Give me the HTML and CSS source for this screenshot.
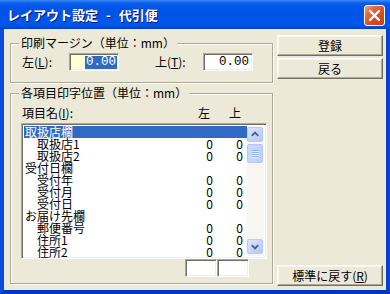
FILE: index.html
```html
<!DOCTYPE html>
<html lang="ja">
<head>
<meta charset="utf-8">
<title>レイアウト設定 - 代引便</title>
<link rel="stylesheet" href="styles.css">
</head>
<body>
<div class="window">
  <div class="titlebar">
    <span class="title">レイアウト設定 - 代引便</span>
    <span class="close">
      <svg width="13" height="13" viewBox="0 0 13 13"><path d="M2 2 L11 11 M11 2 L2 11" stroke="#fff" stroke-width="2.4" stroke-linecap="round"/></svg>
    </span>
  </div>
  <div class="frame">
    <div class="client">
      <div class="leftcol">
        <fieldset class="group g1">
          <legend>印刷マージン（単位：mm）</legend>
          <div class="margin-row">
            <span class="lbl lbl-l">左(<u>L</u>):</span>
            <div class="edit edit-yellow"><span class="val sel">0.00</span></div>
            <span class="lbl lbl-t">上(<u>T</u>):</span>
            <div class="edit"><span class="val">0.00</span></div>
          </div>
        </fieldset>
        <fieldset class="group g2">
          <legend>各項目印字位置（単位：mm）</legend>
          <div class="list-head">
            <span class="hname">項目名(<u>I</u>):</span>
            <span class="hcol hleft">左</span>
            <span class="hcol hright">上</span>
          </div>
          <div class="listbox">
            <div class="items">
              <div class="item selected"><span class="name">取扱店欄</span><span class="num"></span><span class="num"></span></div>
              <div class="item"><span class="name child">取扱店1</span><span class="num">0</span><span class="num">0</span></div>
              <div class="item"><span class="name child">取扱店2</span><span class="num">0</span><span class="num">0</span></div>
              <div class="item"><span class="name">受付日欄</span><span class="num"></span><span class="num"></span></div>
              <div class="item"><span class="name child">受付年</span><span class="num">0</span><span class="num">0</span></div>
              <div class="item"><span class="name child">受付月</span><span class="num">0</span><span class="num">0</span></div>
              <div class="item"><span class="name child">受付日</span><span class="num">0</span><span class="num">0</span></div>
              <div class="item"><span class="name">お届け先欄</span><span class="num"></span><span class="num"></span></div>
              <div class="item"><span class="name child">郵便番号</span><span class="num">0</span><span class="num">0</span></div>
              <div class="item"><span class="name child">住所1</span><span class="num">0</span><span class="num">0</span></div>
              <div class="item"><span class="name child">住所2</span><span class="num">0</span><span class="num">0</span></div>
            </div>
            <div class="vscroll">
              <div class="sbtn">
                <svg width="15" height="15" viewBox="0 0 15 15"><path d="M4 9 L7.5 5.5 L11 9" fill="none" stroke="#4d6185" stroke-width="2"/></svg>
              </div>
              <div class="thumb"><i></i><i></i><i></i><i></i></div>
              <div class="track"></div>
              <div class="sbtn">
                <svg width="15" height="15" viewBox="0 0 15 15"><path d="M4 6 L7.5 9.5 L11 6" fill="none" stroke="#4d6185" stroke-width="2"/></svg>
              </div>
            </div>
          </div>
          <div class="edits">
            <div class="edit small"></div>
            <div class="edit small"></div>
          </div>
        </fieldset>
      </div>
      <div class="rightcol">
        <div class="btn">登録</div>
        <div class="btn">戻る</div>
        <div class="spacer"></div>
        <div class="btn">標準に戻す(<u>R</u>)</div>
      </div>
    </div>
  </div>
</div>
</body>
</html>
```
FILE: styles.css
```css
* { box-sizing: border-box; }
body {
  margin: 0;
  background: #ffffff;
  font-family: "Noto Sans CJK JP", sans-serif;
  font-size: 12px;
  color: #000;
}
.window {
  width: 390px;
  height: 294px;
  display: flex;
  flex-direction: column;
}
.titlebar {
  height: 29px;
  flex: none;
  display: flex;
  align-items: center;
  justify-content: space-between;
  padding: 0 5px 0 7px;
  background: linear-gradient(180deg, #3a8cfb 0, #0b5eea 3px, #0055e8 8px, #0052e5 45%, #0058ec 80%, #0050e0 92%, #003fc8 100%);
}
.title {
  color: #fff;
  font-weight: bold;
  font-size: 13px;
  line-height: 16px;
  word-spacing: 5px;
  text-shadow: 1px 1px 0 #0a1883;
  margin-top: 1px;
}
.close {
  width: 21px;
  height: 21px;
  border: 1px solid #fff;
  border-radius: 3px;
  display: flex;
  align-items: center;
  justify-content: center;
  background: linear-gradient(135deg, #f0a084 0%, #e4673f 30%, #d8491f 65%, #c63d17 100%);
  margin-top: 2px;
}
.frame {
  flex: 1;
  display: flex;
  border: 4px solid #0848d8;
  border-top: 0;
  border-left-color: #0a4cdc;
  border-right-color: #0540d0;
  border-bottom-color: #0037c0;
}
.client {
  flex: 1;
  display: flex;
  gap: 4px;
  padding: 0 3px 0 6px;
  background: #ece9d8;
}
.leftcol {
  width: 263px;
  display: flex;
  flex-direction: column;
  gap: 3px;
  padding-top: 7px;
}
.group {
  margin: 0;
  padding: 0 5px 0 8px;
  min-inline-size: 0;
  border: 1px solid #aca899;
  box-shadow: inset 1px 1px 0 #fff, 1px 1px 0 #fff;
  width: 263px;
}
.group legend {
  padding: 0 2px;
  line-height: 14px;
  font-size: 12px;
  background: #ece9d8;
}
.g1 { height: 47px; padding-top: 3px; }
.g2 { height: 198px; }

.margin-row {
  display: flex;
  align-items: center;
  height: 18px;
  padding-left: 3px;
}
.lbl { line-height: 14px; white-space: nowrap; }
.lbl-l { width: 47px; }
.lbl-t { width: 48px; margin-left: 36px; }

.edit {
  height: 18px;
  width: 50px;
  background: #fff;
  border: 1px solid;
  border-color: #aca899 #fff #fff #aca899;
  box-shadow: inset 1px 1px 0 #716f64, inset -1px -1px 0 #f1efe2;
  display: flex;
  align-items: center;
  justify-content: flex-end;
  padding: 2px 2px 2px 2px;
}
.edit-yellow { background: #ffffd6; padding-right: 1px; }
.val {
  font-family: "Liberation Mono", monospace;
  font-size: 12.5px;
  line-height: 13px;
  padding: 0 1px;
}
.val.sel { background: #316ac5; color: #fff; }

.list-head {
  margin-top: 6px;
  height: 14px;
  line-height: 14px;
  display: grid;
  grid-template-columns: 1fr 30px 30px;
  padding-left: 3px;
  padding-right: 23px;
}
.hcol { text-align: right; }
.hleft { padding-right: 4px; }
.hright { padding-right: 3px; }

.listbox {
  margin: 3px 0 0 2px;
  width: 246px;
  height: 136px;
  display: flex;
  background: #fff;
  border: 1px solid;
  border-color: #aca899 #fff #fff #aca899;
  box-shadow: inset 1px 1px 0 #716f64, inset -1px -1px 0 #f1efe2;
  padding: 2px;
}
.items {
  flex: 1;
  display: flex;
  flex-direction: column;
}
.item {
  height: 12px;
  line-height: 12px;
  display: grid;
  grid-template-columns: 1fr 30px 30px;
  padding-right: 4px;
  white-space: nowrap;
}
.item.selected { background: #316ac5; color: #fff; }
.name { padding-left: 1px; }
.name.child { padding-left: 13px; }
.num { text-align: right; }

.vscroll {
  width: 17px;
  display: flex;
  flex-direction: column;
  background: #f7f6f1;
  padding: 1px 1px 2px 0;
}
.sbtn {
  width: 16px;
  height: 15px;
  border: 1px solid #b8cbf6;
  border-radius: 2px;
  background: linear-gradient(135deg, #dde7fe 0%, #c6d6fc 50%, #b4c8f7 100%);
  display: flex;
  align-items: center;
  justify-content: center;
}
.sbtn svg { display: block; }
.thumb {
  margin-top: 2px;
  width: 16px;
  height: 19px;
  border: 1px solid #b5c8f4;
  border-radius: 2px;
  background: linear-gradient(90deg, #c9d8fc 0%, #bfd1fb 100%);
  display: flex;
  flex-direction: column;
  align-items: center;
  justify-content: center;
  gap: 1px;
}
.thumb i {
  display: block;
  width: 7px;
  height: 1px;
  background: #8eaff4;
  box-shadow: 0 1px 0 #eef4fe;
}
.track { flex: 1; }

.edits {
  display: flex;
  justify-content: flex-end;
  padding-right: 18px;
}
.edit.small { width: 32px; }

.rightcol {
  width: 106px;
  display: flex;
  flex-direction: column;
  gap: 2px;
  padding: 6px 0 4px 0;
}
.spacer { flex: 1; }
.btn {
  height: 21px;
  background: #ece9d8;
  border: 1px solid;
  border-color: #fff #716f64 #716f64 #fff;
  box-shadow: inset -1px -1px 0 #aca899, inset 1px 1px 0 #f6f5ee;
  display: flex;
  align-items: center;
  justify-content: center;
  line-height: 14px;
  white-space: nowrap;
}
```
